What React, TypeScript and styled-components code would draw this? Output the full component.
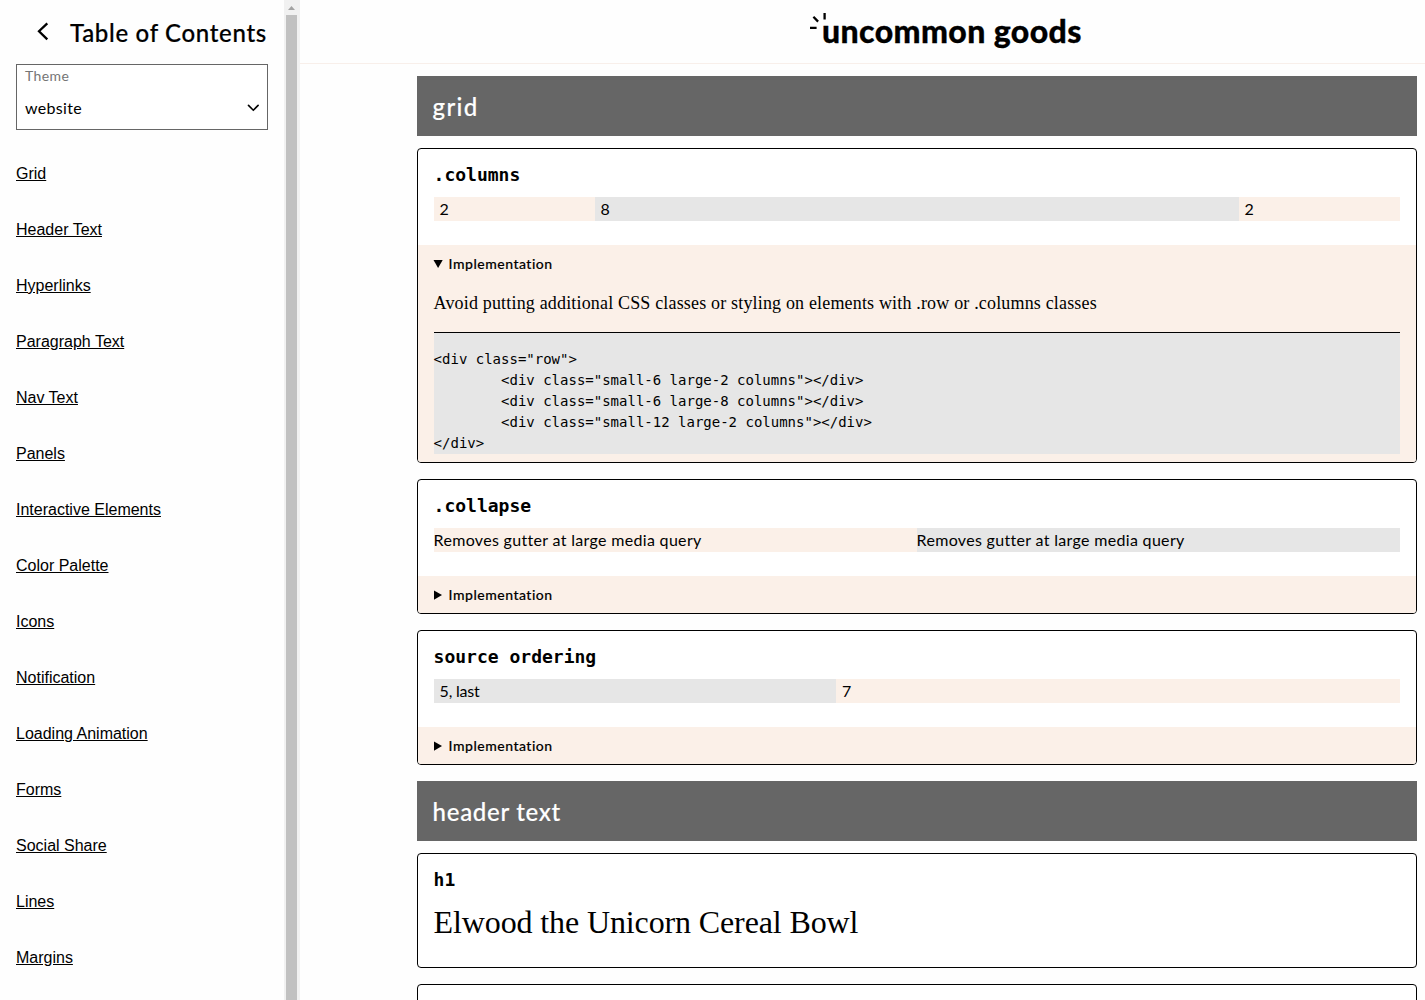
import React from "react";
import styled, { createGlobalStyle } from "styled-components";

const GlobalStyle = createGlobalStyle`
  *, *::before, *::after { box-sizing: border-box; }
  html, body { margin: 0; height: 100%; overflow: hidden; background: #fefefe; }
  body { font-family: Lato, "Open Sans", sans-serif; font-size: 16px; color: #000; }
  h1, h2, h3, p, pre { margin: 0; font-weight: 400; }
`;

const SANS = `Lato, "Open Sans", sans-serif`;
const SERIF = `"Liberation Serif", "Times New Roman", serif`;
const MONO = `"DejaVu Sans Mono", monospace`;
const BLUSH = "#fbf0e8";
const GREY = "#e6e6e6";

const Page = styled.div`
  display: grid;
  grid-template-columns: 284px 16px 1fr;
  height: 1000px;
  overflow: hidden;
`;

const Sidebar = styled.aside`
  padding: 16px 16px 0;
  overflow: hidden;
`;

const SidebarHead = styled.header`
  display: flex;
  align-items: center;
  height: 32px;
  padding-left: 20px;
`;

const BackIcon = styled.svg`
  flex: none;
  width: 14px;
  height: 20px;
  margin-right: 20px;
  margin-top: -2px;
`;

const SidebarTitle = styled.h2`
  padding-top: 1px;
  font: 500 24px/32px ${SANS};
  letter-spacing: 0.68px;
  -webkit-text-stroke: 0.2px #000;
  white-space: nowrap;
`;

const Select = styled.button`
  display: grid;
  grid-template-columns: 1fr 14px;
  align-content: start;
  align-items: center;
  width: 252px;
  height: 66px;
  margin: 16px 0 0;
  padding: 1px 7px 0 8px;
  border: 1px solid #666;
  background: #fff;
  text-align: left;
  font-family: ${SANS};
  color: #000;
`;

const SelectLabel = styled.span`
  grid-column: 1 / -1;
  font-size: 14px;
  line-height: 20px;
  letter-spacing: 0.4px;
  color: #757575;
`;

const SelectValue = styled.span`
  margin-top: 10px;
  font-size: 16px;
  line-height: 24px;
  letter-spacing: 0.3px;
`;

const ChevronIcon = styled.svg`
  width: 14px;
  height: 10px;
  margin-top: 10px;
`;

const Nav = styled.nav`
  display: flex;
  flex-direction: column;
  align-items: flex-start;
  gap: 32px;
  margin-top: 32px;
`;

const NavLink = styled.a`
  font: 16px/24px "Liberation Sans", Arial, sans-serif;
  color: #000;
  text-decoration: underline;
`;

const ScrollTrack = styled.div`
  display: flex;
  flex-direction: column;
  align-items: center;
  background: #f1f1f1;
`;

const ScrollArrow = styled.svg`
  flex: none;
  width: 16px;
  height: 15px;
`;

const ScrollThumb = styled.div`
  flex: 1;
  width: 11px;
  margin-right: 1px;
  background: #c1c1c1;
`;

const Main = styled.main`
  min-width: 0;
  overflow: hidden;
`;

const TopBar = styled.header`
  display: flex;
  height: 64px;
  padding: 13px 0 0 509px;
  border-bottom: 1px solid #f8efea;
`;

const Spark = styled.svg`
  flex: none;
  width: 17px;
  height: 17px;
`;

const Wordmark = styled.span`
  margin: -2px 0 0 -4px;
  font: 900 32px/40px ${SANS};
  letter-spacing: 0.4px;
  -webkit-text-stroke: 0.3px #000;
  white-space: nowrap;
`;

const Content = styled.div`
  width: 1000px;
  margin: 12px 0 0 116.6px;
`;

const SectionTitle = styled.h2<{ $spacing?: number }>`
  height: 60px;
  margin-bottom: 12px;
  padding: 1px 16px 0;
  background: #666;
  color: #fff;
  font: 500 24px/60px ${SANS};
  letter-spacing: ${(p) => p.$spacing ?? 0.7}px;
  -webkit-text-stroke: 0.15px #fff;
`;

const Card = styled.section<{ $height?: number }>`
  height: ${(p) => (p.$height ? `${p.$height}px` : "auto")};
  margin-bottom: 16px;
  border: 1px solid #000;
  border-radius: 4px;
  overflow: hidden;
  background: #fff;
`;

const CardTitle = styled.h3`
  padding: 14px 16px 0;
  margin-bottom: 10px;
  font: 700 18px/24px ${MONO};
`;

const Row = styled.div<{ $columns: string }>`
  display: grid;
  grid-template-columns: ${(p) => p.$columns};
  margin: 0 16px 24px;
`;

const Cell = styled.div<{ $fill: string; $flush?: boolean; $spacing?: number }>`
  height: 24px;
  padding-left: ${(p) => (p.$flush ? 0 : 6)}px;
  background: ${(p) => p.$fill};
  font: 16px/24px ${SANS};
  letter-spacing: ${(p) => p.$spacing ?? 0}px;
  white-space: nowrap;
`;

const Implementation = styled.div`
  padding: 0 16px;
  background: ${BLUSH};
`;

const Summary = styled.div`
  display: flex;
  align-items: center;
  gap: 6px;
  height: 37px;
  font: 500 14px/20px ${SANS};
  letter-spacing: 0.5px;
  -webkit-text-stroke: 0.15px #000;
`;

const Marker = styled.svg`
  width: 10px;
  height: 10px;
  margin-left: -1px;
`;

const Note = styled.p`
  padding: 9px 0 17px;
  font: 18px/24px ${SERIF};
  letter-spacing: 0.17px;
  white-space: nowrap;
`;

const Code = styled.pre`
  padding: 16px 0 0;
  border-top: 1px solid #000;
  background: ${GREY};
  font: 14px/21px ${MONO};
  tab-size: 8;
`;

const CodeFoot = styled.div`
  height: 8px;
`;

const Headline = styled.h1`
  margin: 0 16px;
  font: 32px/40px ${SERIF};
  letter-spacing: -0.12px;
  white-space: nowrap;
`;

const NAV_ITEMS = [
  "Grid", "Header Text", "Hyperlinks", "Paragraph Text", "Nav Text", "Panels",
  "Interactive Elements", "Color Palette", "Icons", "Notification",
  "Loading Animation", "Forms", "Social Share", "Lines", "Margins",
];

const SNIPPET = `<div class="row">
\t<div class="small-6 large-2 columns"></div>
\t<div class="small-6 large-8 columns"></div>
\t<div class="small-12 large-2 columns"></div>
</div>`;

function ImplementationSummary({ open }: { open?: boolean }) {
  return (
    <Summary>
      <Marker viewBox="0 0 10 10">
        <path d={open ? "M0.5 1h9.2L5.1 9z" : "M1 0.5v9.2L9 5.1z"} />
      </Marker>
      Implementation
    </Summary>
  );
}

export default function App() {
  return (
    <>
      <GlobalStyle />
      <Page>
        <Sidebar>
          <SidebarHead>
            <BackIcon viewBox="0 0 14 20" fill="none" stroke="#000" strokeWidth="2.3">
              <path d="M11.3 2.3 3 10.2l8.3 8.2" />
            </BackIcon>
            <SidebarTitle>Table of Contents</SidebarTitle>
          </SidebarHead>
          <Select type="button">
            <SelectLabel>Theme</SelectLabel>
            <SelectValue>website</SelectValue>
            <ChevronIcon viewBox="0 0 14 10" fill="none" stroke="#000" strokeWidth="1.6">
              <path d="M2.5 2.4 7.3 7.2l4.8-4.8" strokeLinecap="round" />
            </ChevronIcon>
          </Select>
          <Nav>
            {NAV_ITEMS.map((item) => (
              <NavLink key={item}>{item}</NavLink>
            ))}
          </Nav>
        </Sidebar>
        <ScrollTrack>
          <ScrollArrow viewBox="0 0 16 15">
            <path d="M4 10h7L7.5 6z" fill="#a3a3a3" />
          </ScrollArrow>
          <ScrollThumb />
        </ScrollTrack>
        <Main>
          <TopBar>
            <Spark viewBox="0 0 17 17" fill="none" stroke="#000" strokeWidth="2.3">
              <path d="M1 14.8h6.6M4.4 3.8l4.7 4.8M15.6 0v6.6" />
            </Spark>
            <Wordmark>uncommon goods</Wordmark>
          </TopBar>
          <Content>
            <SectionTitle $spacing={1.3}>grid</SectionTitle>
            <Card>
              <CardTitle>.columns</CardTitle>
              <Row $columns="2fr 8fr 2fr">
                <Cell $fill={BLUSH}>2</Cell>
                <Cell $fill={GREY}>8</Cell>
                <Cell $fill={BLUSH}>2</Cell>
              </Row>
              <Implementation>
                <ImplementationSummary open />
                <Note>
                  Avoid putting additional CSS classes or styling on elements with .row or .columns classes
                </Note>
                <Code>{SNIPPET}</Code>
                <CodeFoot />
              </Implementation>
            </Card>
            <Card>
              <CardTitle>.collapse</CardTitle>
              <Row $columns="1fr 1fr">
                <Cell $fill={BLUSH} $flush $spacing={0.32}>Removes gutter at large media query</Cell>
                <Cell $fill={GREY} $flush $spacing={0.32}>Removes gutter at large media query</Cell>
              </Row>
              <Implementation>
                <ImplementationSummary />
              </Implementation>
            </Card>
            <Card>
              <CardTitle>source ordering</CardTitle>
              <Row $columns="5fr 7fr">
                <Cell $fill={GREY} $spacing={-0.2}>5, last</Cell>
                <Cell $fill={BLUSH}>7</Cell>
              </Row>
              <Implementation>
                <ImplementationSummary />
              </Implementation>
            </Card>
            <SectionTitle>header text</SectionTitle>
            <Card $height={115}>
              <CardTitle>h1</CardTitle>
              <Headline>Elwood the Unicorn Cereal Bowl</Headline>
            </Card>
            <Card $height={115} />
          </Content>
        </Main>
      </Page>
    </>
  );
}
